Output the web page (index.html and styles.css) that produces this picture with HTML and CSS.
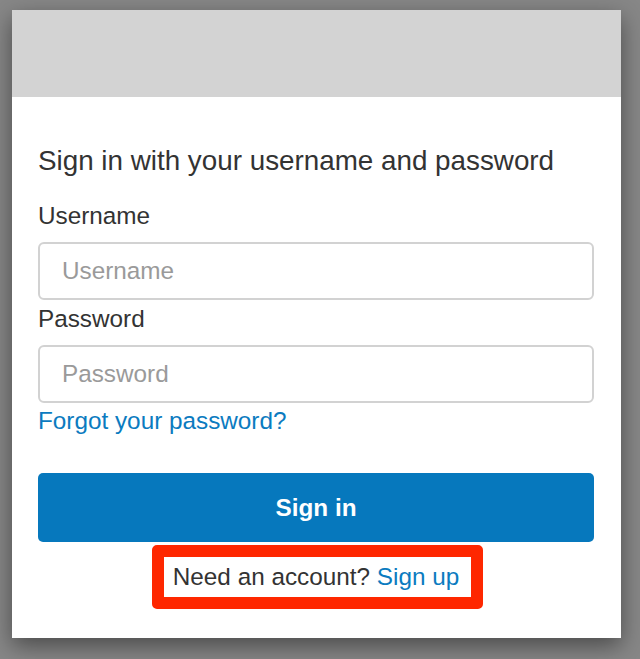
FILE: index.html
```html
<!DOCTYPE html>
<html lang="en">
<head>
  <meta charset="UTF-8">
  <title>Sign in</title>
  <link rel="stylesheet" href="styles.css">
</head>
<body>
  <div class="modal">
    <div class="banner"></div>
    <div class="content">
      <h2>Sign in with your username and password</h2>
      <label for="username">Username</label>
      <input id="username" type="text" placeholder="Username">
      <label for="password">Password</label>
      <input id="password" type="password" placeholder="Password">
      <a class="forgot" href="#">Forgot your password?</a>
      <button type="button">Sign in</button>
      <div class="signup-wrap">
        <div class="signup">Need an account? <a href="#">Sign up</a></div>
      </div>
    </div>
  </div>
</body>
</html>
```

FILE: styles.css
```css
body {
  font-family: 'Liberation Sans', Arial, sans-serif;
  margin: 0;
  padding: 10px 0 0 12px;
  height: 659px;
  box-sizing: border-box;
  background: #878787;
  overflow: hidden;
}

.modal {
  width: 609px;
  height: 628px;
  background: white;
  box-shadow: 0 8px 22px rgba(0, 0, 0, 0.45);
}

.banner {
  height: 87px;
  background: #d3d3d3;
}

.content {
  padding: 0 27px 0 26px;
  display: flex;
  flex-direction: column;
}

h2 {
  margin: 48px 0 25px;
  font-size: 27.8px;
  line-height: 32px;
  font-weight: normal;
  color: #333;
}

label {
  font-size: 24.3px;
  line-height: 28px;
  color: #333;
  margin-bottom: 12px;
}

input {
  height: 58px;
  box-sizing: border-box;
  border: 2px solid #d2d2d2;
  border-radius: 6px;
  padding: 0 22px;
  font-family: inherit;
  font-size: 24.3px;
  color: #333;
  margin: 0 0 5px;
}

input::placeholder {
  color: #9a9a9a;
}

#password {
  margin-bottom: 6px;
}

.forgot {
  margin-top: -2px;
  font-size: 24.3px;
  line-height: 28px;
  color: #0b7bc0;
  text-decoration: none;
  align-self: flex-start;
}

button {
  margin-top: 38px;
  height: 69px;
  border: none;
  border-radius: 5px;
  background: #0678bd;
  color: white;
  font-family: inherit;
  font-size: 24.3px;
  font-weight: bold;
}

.signup-wrap {
  display: flex;
  justify-content: center;
  margin-top: 3px;
  padding-left: 3px;
}

.signup {
  border: 12px solid #fe2700;
  border-radius: 5px;
  padding: 6px 12px 6px 9px;
  font-size: 24.3px;
  line-height: 28px;
  color: #333;
}

.signup a {
  color: #0b7bc0;
  text-decoration: none;
}
```
